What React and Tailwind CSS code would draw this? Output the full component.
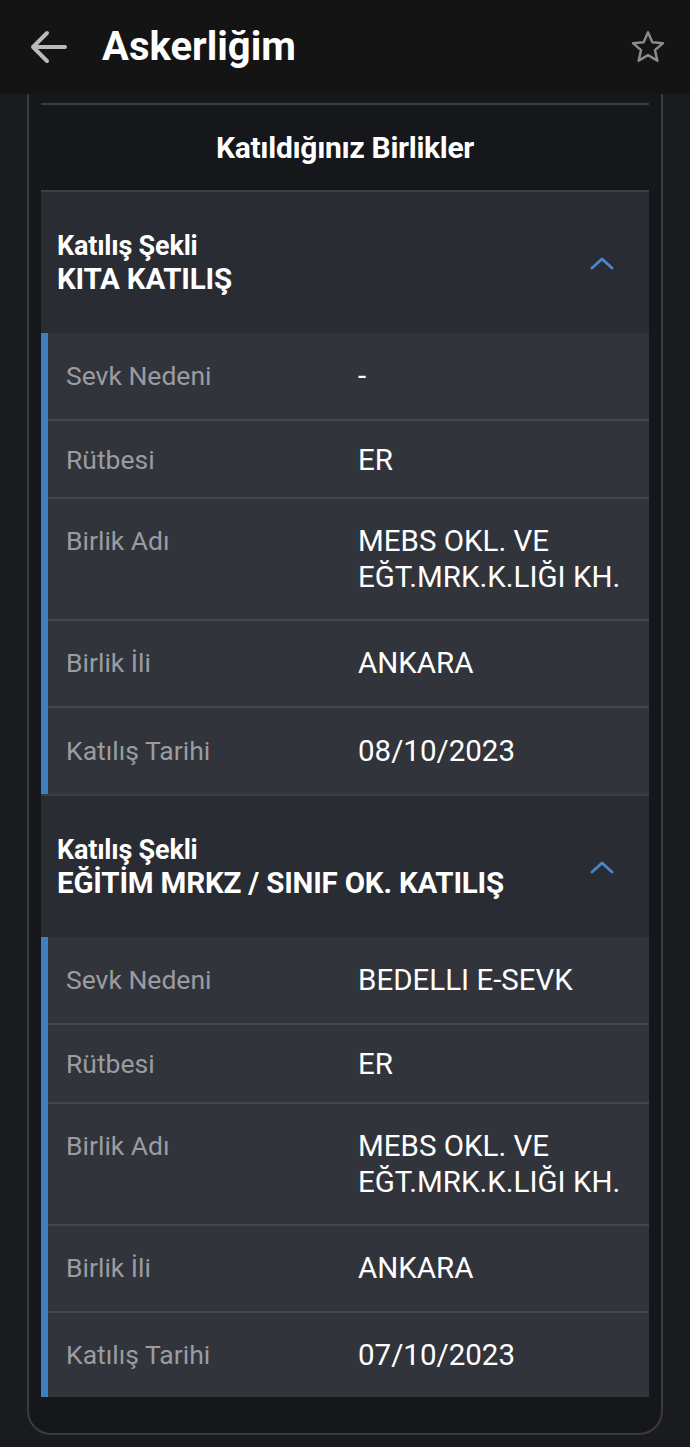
import React from 'react';

const sections = [
  {
    title: 'KITA KATILIŞ',
    rows: [
      { label: 'Sevk Nedeni', value: '-', pad: 'pt-[25px] pb-[25px]' },
      { label: 'Rütbesi', value: 'ER', pad: 'pt-[21px] pb-[19px]' },
      { label: 'Birlik Adı', value: 'MEBS OKL. VE EĞT.MRK.K.LIĞI KH.', pad: 'pt-[24px] pb-[24px]' },
      { label: 'Birlik İli', value: 'ANKARA', pad: 'pt-[24px] pb-[25px]' },
      { label: 'Katılış Tarihi', value: '08/10/2023', pad: 'pt-[25px] pb-[25px]' },
    ],
  },
  {
    title: 'EĞİTİM MRKZ / SINIF OK. KATILIŞ',
    rows: [
      { label: 'Sevk Nedeni', value: 'BEDELLI E-SEVK', pad: 'pt-[25px] pb-[25px]' },
      { label: 'Rütbesi', value: 'ER', pad: 'pt-[21px] pb-[20px]' },
      { label: 'Birlik Adı', value: 'MEBS OKL. VE EĞT.MRK.K.LIĞI KH.', pad: 'pt-[24px] pb-[24px]' },
      { label: 'Birlik İli', value: 'ANKARA', pad: 'pt-[24px] pb-[25px]' },
      { label: 'Katılış Tarihi', value: '07/10/2023', pad: 'pt-[24px] pb-[24px]' },
    ],
  },
];

const ChevronUp = () => (
  <svg width="26" height="16" viewBox="0 0 26 16" fill="none">
    <path d="M3 13 L13 4 L23 13" stroke="#4a86c5" strokeWidth="3" strokeLinecap="round" strokeLinejoin="round" />
  </svg>
);

const Section = ({ section }) => (
  <div>
    {/* header */}
    <div className="bg-[#292c33] h-[143px] flex items-center justify-between pl-[16px] pr-[34px] border-t-2 border-[#3b3e45]">
      <div className="text-white font-bold pt-[1px]">
        <p className="text-[27px] leading-[31px] tracking-[-0.2px]">Katılış Şekli</p>
        <p className="text-[29.5px] leading-[34px] tracking-[-0.2px]">{section.title}</p>
      </div>
      <ChevronUp />
    </div>
    {/* rows */}
    <div className="bg-[#31343b] border-l-[7px] border-[#3f7fc0]">
      {section.rows.map((row, i) => (
        <div key={row.label} className={`flex ${row.pad} ${i > 0 ? 'border-t-2 border-[#43464d]' : ''}`}>
          <div className="w-[310px] pl-[18px] text-[26.5px] leading-[36px] text-[#9b9ca0]">{row.label}</div>
          <div className="flex-1 pr-[16px] text-[29.5px] leading-[36px] text-white">{row.value}</div>
        </div>
      ))}
    </div>
  </div>
);

export default function App() {
  return (
    <div className="min-h-[1447px] bg-[#1a1b1e]" style={{ fontFamily: 'Roboto, "Noto Sans", sans-serif' }}>
      {/* top bar */}
      <div className="h-[94px] bg-[#141414] flex items-center pl-[28px] pr-[22px]">
        <svg width="40" height="34" viewBox="0 0 40 34" fill="none">
          <path d="M37 17 H5 M19 3 L5 17 L19 31" stroke="#b9b9be" strokeWidth="4" strokeLinecap="round" strokeLinejoin="round" />
        </svg>
        <h1 className="ml-[34px] text-[40px] font-bold text-white">Askerliğim</h1>
        <svg className="ml-auto" width="40" height="40" viewBox="0 0 24 24" fill="none">
          <path d="M12 3.2 L14.6 9.1 L21 9.7 L16.2 13.9 L17.6 20.2 L12 16.9 L6.4 20.2 L7.8 13.9 L3 9.7 L9.4 9.1 Z" stroke="#8a8a8f" strokeWidth="1.5" strokeLinejoin="round" />
        </svg>
      </div>

      {/* card */}
      <div className="mx-[27px] pb-[36px] bg-[#16171a] border-x-2 border-b-2 border-[#3a3b40] rounded-b-[24px] px-[12px]">
        <div className="pt-[9px]">
          <div className="h-[2px] bg-[#3c3d42]" />
        </div>
        <div className="h-[85px] flex items-center justify-center">
          <h2 className="text-[30px] font-bold text-white tracking-[-0.3px]">Katıldığınız Birlikler</h2>
        </div>
        {sections.map((s) => (
          <Section key={s.title} section={s} />
        ))}
      </div>
    </div>
  );
}
